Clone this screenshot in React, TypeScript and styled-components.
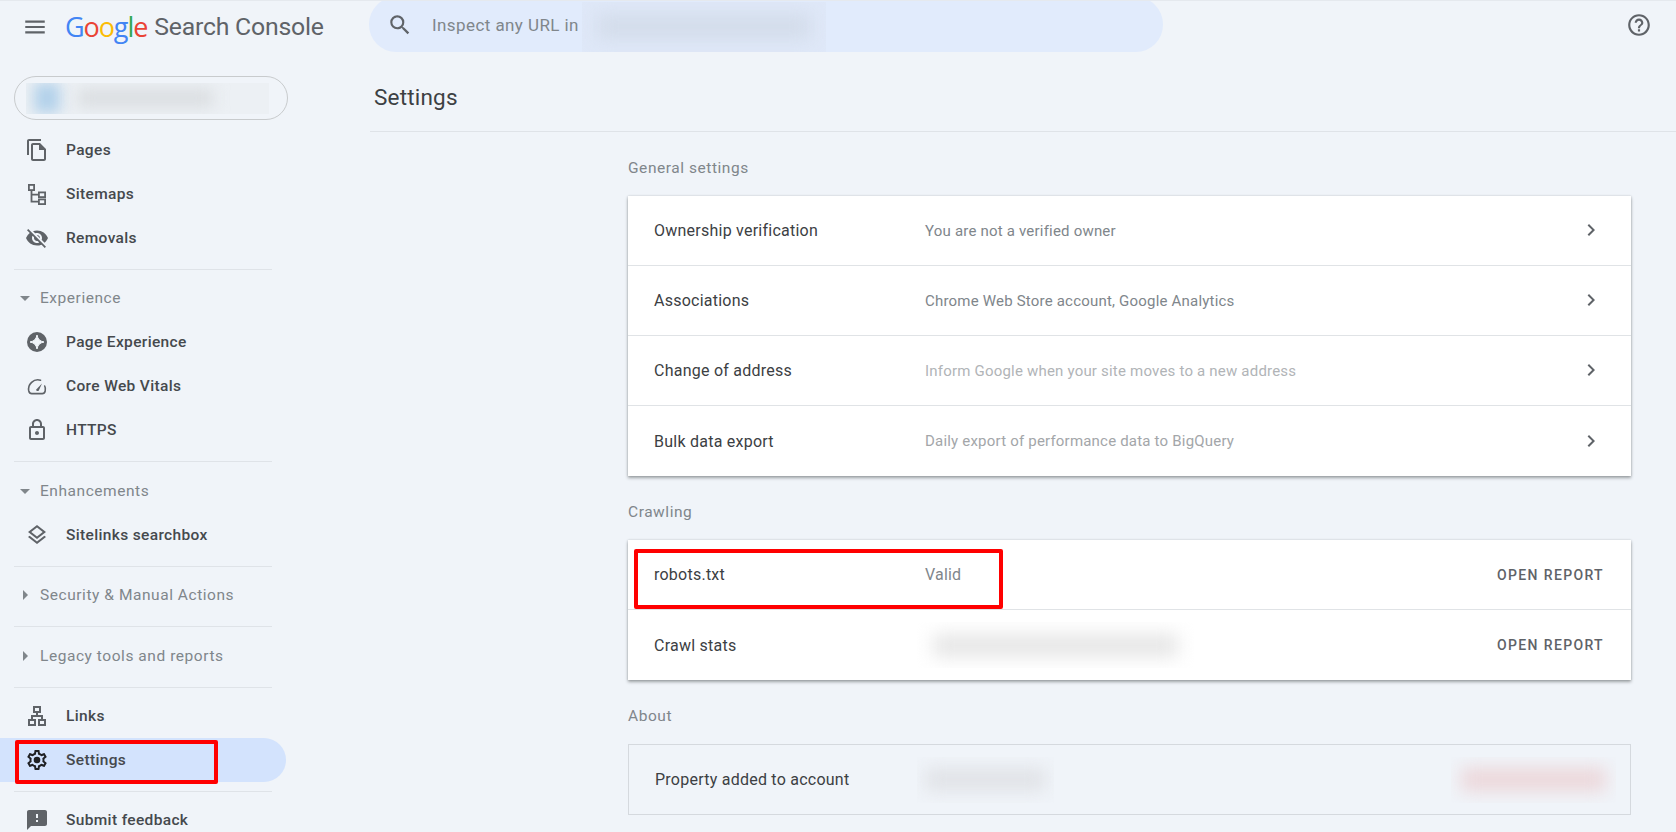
import styled, { createGlobalStyle } from "styled-components"
import { ReactNode } from "react"
import {
  MdArrowDropDown,
  MdArrowRight,
  MdChevronRight,
  MdFeedback,
  MdHelpOutline,
  MdMenu,
  MdOutlineFileCopy,
  MdOutlineLan,
  MdOutlineLayers,
  MdOutlineLock,
  MdSearch,
  MdVisibilityOff,
} from "react-icons/md"

const GlobalStyle = createGlobalStyle`
  html, body {
    margin: 0;
    background: #f0f4f9;
  }
  * {
    box-sizing: border-box;
  }
`

function SitemapIcon() {
  return (
    <svg viewBox="0 0 24 24" width="24" height="24" fill="none" stroke="currentColor" strokeWidth="1.8">
      <rect x="3.9" y="2.9" width="5.2" height="5.2" />
      <rect x="13.9" y="10.4" width="6.2" height="4.7" />
      <rect x="13.9" y="17.4" width="6.2" height="4.7" />
      <path d="M6.5 8v11.7h7.4M6.5 12.7h7.4" />
    </svg>
  )
}

function StarCircleIcon() {
  return (
    <svg viewBox="0 0 24 24" width="24" height="24">
      <circle cx="12" cy="12" r="10" fill="currentColor" />
      <path
        d="M12 5c.9 4.300 2.700 6.100 7 7-4.300.9-6.100 2.700-7 7-.9-4.300-2.700-6.100-7-7 4.300-.9 6.100-2.700 7-7z"
        fill="#f0f4f9"
        stroke="#f0f4f9"
        strokeWidth="1"
        strokeLinejoin="round"
      />
    </svg>
  )
}

function GaugeIcon() {
  return (
    <svg viewBox="0 0 24 24" width="24" height="24" fill="none" stroke="currentColor" strokeWidth="1.6">
      <path d="M15.5 6.200A9.300 9.300 0 0 0 3.800 17c.4 1.600 1.300 2.600 2.900 2.600h10.600c1.600 0 2.500-1 2.900-2.600.5-1.800.2-3.600-.5-5" strokeLinecap="round" />
      <path d="M11 15.700 17 9.500l-3.300 7.200a1.700 1.700 0 0 1-2.700-1z" fill="currentColor" stroke="none" />
    </svg>
  )
}

function GearIcon() {
  return (
    <svg viewBox="0 0 24 24" width="24" height="24" fill="currentColor">
      <path d="M19.43 12.98c.04-.32.07-.64.07-.98 0-.34-.03-.66-.07-.98l2.11-1.65c.19-.15.24-.42.12-.64l-2-3.46c-.09-.16-.26-.25-.44-.25-.06 0-.12.01-.17.03l-2.49 1c-.52-.4-1.08-.73-1.69-.98l-.38-2.65C14.46 2.18 14.25 2 14 2h-4c-.25 0-.46.18-.49.42l-.38 2.65c-.61.25-1.17.59-1.69.98l-2.49-1c-.06-.02-.12-.03-.18-.03-.17 0-.34.09-.43.25l-2 3.46c-.13.22-.07.49.12.64l2.11 1.65c-.04.32-.07.65-.07.98 0 .33.03.66.07.98l-2.11 1.65c-.19.15-.24.42-.12.64l2 3.46c.09.16.26.25.44.25.06 0 .12-.01.17-.03l2.49-1c.52.4 1.08.73 1.69.98l.38 2.65c.03.24.24.42.49.42h4c.25 0 .46-.18.49-.42l.38-2.65c.61-.25 1.17-.59 1.69-.98l2.49 1c.06.02.12.03.18.03.17 0 .34-.09.43-.25l2-3.46c.12-.22.07-.49-.12-.64l-2.11-1.65zm-1.98-1.71c.04.31.05.52.05.73 0 .21-.02.43-.05.73l-.14 1.13.89.7 1.08.84-.7 1.21-1.27-.51-1.04-.42-.9.68c-.43.32-.84.56-1.25.73l-1.06.43-.16 1.13-.2 1.35h-1.4l-.19-1.35-.16-1.13-1.06-.43c-.43-.18-.83-.41-1.23-.71l-.91-.7-1.06.43-1.27.51-.7-1.21 1.08-.84.89-.7-.14-1.13c-.03-.31-.05-.54-.05-.74s.02-.43.05-.73l.14-1.13-.89-.7-1.08-.84.7-1.21 1.27.51 1.04.42.9-.68c.43-.32.84-.56 1.25-.73l1.06-.43.16-1.13.2-1.35h1.39l.19 1.35.16 1.13 1.06.43c.43.18.83.41 1.23.71l.91.7 1.06-.43 1.27-.51.7 1.21-1.07.85-.89.7.14 1.13z" />
      <circle cx="12" cy="12" r="3.300" />
    </svg>
  )
}

type NavEntry = { label: string; icon: ReactNode }

const topNav: NavEntry[] = [
  { label: "Pages", icon: <MdOutlineFileCopy size={24} /> },
  { label: "Sitemaps", icon: <SitemapIcon /> },
  { label: "Removals", icon: <MdVisibilityOff size={24} /> },
]

const experienceNav: NavEntry[] = [
  { label: "Page Experience", icon: <StarCircleIcon /> },
  { label: "Core Web Vitals", icon: <GaugeIcon /> },
  { label: "HTTPS", icon: <MdOutlineLock size={24} /> },
]

const generalRows = [
  { label: "Ownership verification", value: "You are not a verified owner", tone: "#80868b" },
  { label: "Associations", value: "Chrome Web Store account, Google Analytics", tone: "#80868b" },
  { label: "Change of address", value: "Inform Google when your site moves to a new address", tone: "#b1b4b7" },
  { label: "Bulk data export", value: "Daily export of performance data to BigQuery", tone: "#a3a6a9" },
]

export default function App() {
  return (
    <Page>
      <GlobalStyle />
      <Sidebar>
        <Brand>
          <MenuButton>
            <MdMenu size={26} />
          </MenuButton>
          <GoogleWord>
            <b style={{ color: "#4285f4" }}>G</b>
            <b style={{ color: "#ea4335" }}>o</b>
            <b style={{ color: "#fbbc05" }}>o</b>
            <b style={{ color: "#4285f4" }}>g</b>
            <b style={{ color: "#34a853" }}>l</b>
            <b style={{ color: "#ea4335" }}>e</b>
          </GoogleWord>
          <ProductWord>Search Console</ProductWord>
        </Brand>

        <PropertyPill>
          <PropertyBlur>
            <BlurDot />
            <BlurLine />
          </PropertyBlur>
        </PropertyPill>

        <Nav>
          {topNav.map((item) => (
            <NavItem key={item.label}>
              <NavIcon>{item.icon}</NavIcon>
              {item.label}
            </NavItem>
          ))}
          <Divider />

          <GroupHeader>
            <GroupArrow>
              <MdArrowDropDown size={24} />
            </GroupArrow>
            Experience
          </GroupHeader>
          {experienceNav.map((item) => (
            <NavItem key={item.label}>
              <NavIcon>{item.icon}</NavIcon>
              {item.label}
            </NavItem>
          ))}
          <Divider />

          <GroupHeader>
            <GroupArrow>
              <MdArrowDropDown size={24} />
            </GroupArrow>
            Enhancements
          </GroupHeader>
          <NavItem>
            <NavIcon>
              <MdOutlineLayers size={24} />
            </NavIcon>
            Sitelinks searchbox
          </NavItem>
          <Divider />

          <GroupHeader>
            <GroupArrow>
              <MdArrowRight size={24} />
            </GroupArrow>
            Security &amp; Manual Actions
          </GroupHeader>
          <Divider />

          <GroupHeader>
            <GroupArrow>
              <MdArrowRight size={24} />
            </GroupArrow>
            Legacy tools and reports
          </GroupHeader>
          <Divider />

          <NavItem>
            <NavIcon>
              <MdOutlineLan size={24} />
            </NavIcon>
            Links
          </NavItem>
          <NavItem $active>
            <NavIcon $active>
              <GearIcon />
            </NavIcon>
            Settings
            <SettingsMark />
          </NavItem>
          <Divider />

          <NavItem>
            <NavIcon>
              <MdFeedback size={24} />
            </NavIcon>
            Submit feedback
          </NavItem>
        </Nav>
      </Sidebar>

      <Main>
        <TopBar>
          <SearchBar>
            <MdSearch size={26} color="#5f6368" />
            <SearchText>Inspect any URL in</SearchText>
            <SearchBlur>
              <BlurBar $color="#d3dcea" />
            </SearchBlur>
          </SearchBar>
          <HelpButton>
            <MdHelpOutline size={26} />
          </HelpButton>
        </TopBar>

        <TitleRow>
          <Title>Settings</Title>
        </TitleRow>

        <Content>
          <SectionTitle>General settings</SectionTitle>
          <Card>
            {generalRows.map((row) => (
              <Row key={row.label}>
                <RowLabel>{row.label}</RowLabel>
                <RowValue $tone={row.tone}>{row.value}</RowValue>
                <RowChevron>
                  <MdChevronRight size={24} />
                </RowChevron>
              </Row>
            ))}
          </Card>

          <SectionTitle>Crawling</SectionTitle>
          <Card>
            <Row>
              <RowLabel>robots.txt</RowLabel>
              <StatusValue>Valid</StatusValue>
              <RowAction>OPEN REPORT</RowAction>
              <RobotsMark />
            </Row>
            <Row>
              <RowLabel>Crawl stats</RowLabel>
              <ValueBlur $width={279}>
                <BlurBar $color="#e6e6e6" />
              </ValueBlur>
              <RowAction>OPEN REPORT</RowAction>
            </Row>
          </Card>

          <SectionTitle>About</SectionTitle>
          <AboutBox>
            <AboutLabel>Property added to account</AboutLabel>
            <ValueBlur $width={137}>
              <BlurBar $color="#e0e2e6" />
            </ValueBlur>
            <RemoveBlur>
              <BlurBar $color="#ecd6d9" />
            </RemoveBlur>
          </AboutBox>
        </Content>
      </Main>
    </Page>
  )
}

const Page = styled.div`
  display: grid;
  grid-template-columns: 369px 1fr;
  height: 832px;
  overflow: hidden;
  border-top: 1px solid #e5e9ee;
  font-family: Roboto, "Liberation Sans", sans-serif;
  background: #f0f4f9;
`

const Sidebar = styled.aside`
  display: flex;
  flex-direction: column;
  min-width: 0;
`

const Brand = styled.div`
  display: flex;
  align-items: center;
  height: 51px;
  padding-left: 22px;
`

const MenuButton = styled.div`
  display: flex;
  width: 43px;
  color: #5f6368;
`

const GoogleWord = styled.div`
  font-family: "Open Sans", Roboto, sans-serif;
  font-size: 27px;
  letter-spacing: -1.1px;
  line-height: 34px;

  b {
    font-weight: 400;
  }
`

const ProductWord = styled.div`
  margin-left: 7px;
  font-size: 24.800px;
  line-height: 34px;
  letter-spacing: -0.2px;
  color: #5f6368;
`

const PropertyPill = styled.div`
  display: flex;
  align-items: center;
  width: 274px;
  height: 44px;
  margin: 24px 0 0 14px;
  padding-left: 11px;
  border: 1px solid #c8cbcd;
  border-radius: 22px;
`

const PropertyBlur = styled.div`
  display: flex;
  align-items: center;
  width: 243px;
  height: 31px;
  overflow: hidden;
  background: #ecf0f4;
`

const BlurDot = styled.div`
  flex: none;
  width: 26px;
  height: 30px;
  margin-left: 8px;
  background: #b2d1ea;
  filter: blur(7px);
`

const BlurLine = styled.div`
  width: 135px;
  height: 16px;
  margin-left: 18px;
  background: #d8dbde;
  filter: blur(8px);
`

const Nav = styled.nav`
  display: flex;
  flex-direction: column;
  margin-top: 8px;
`

const NavItem = styled.div<{ $active?: boolean }>`
  position: relative;
  display: flex;
  align-items: center;
  flex: none;
  width: 286px;
  height: 44px;
  padding-left: 25px;
  border-radius: 0 22px 22px 0;
  background: ${({ $active }) => ($active ? "#d3e3fd" : "transparent")};
  font-size: 15.500px;
  font-weight: 500;
  letter-spacing: 0.35px;
  color: #45494d;
`

const NavIcon = styled.span<{ $active?: boolean }>`
  display: flex;
  width: 41px;
  color: ${({ $active }) => ($active ? "#202124" : "#5f6368")};
`

const Divider = styled.div`
  flex: none;
  width: 258px;
  height: 1px;
  margin: 9px 0 6.400px 14px;
  background: #dfe3e8;
`

const GroupHeader = styled.div`
  display: flex;
  align-items: center;
  flex: none;
  height: 44px;
  padding-left: 13px;
  font-size: 15.500px;
  font-weight: 400;
  letter-spacing: 0.55px;
  color: #80868b;
`

const GroupArrow = styled.span`
  display: flex;
  width: 27px;
  color: #80868b;
`

const SettingsMark = styled.div`
  position: absolute;
  top: 2px;
  left: 15px;
  width: 203px;
  height: 44px;
  border: 4px solid #ff0000;
  border-radius: 2px;
`

const Main = styled.main`
  display: flex;
  flex-direction: column;
  min-width: 0;
`

const TopBar = styled.div`
  display: flex;
  align-items: flex-start;
  justify-content: space-between;
  height: 51px;
  padding-right: 24px;
`

const SearchBar = styled.div`
  display: flex;
  align-items: center;
  flex: none;
  width: 794px;
  height: 55px;
  margin-top: -4px;
  padding: 0 0 0 18px;
  border-radius: 27px;
  background: #e1ebfc;
`

const SearchText = styled.span`
  margin-left: 19px;
  font-size: 17px;
  letter-spacing: 0.42px;
  color: #80868b;
`

const SearchBlur = styled.div`
  display: flex;
  align-items: center;
  width: 244px;
  height: 50px;
  margin: 4px 0 0 3px;
  overflow: hidden;
  background: #dfe8f8;
`

const BlurBar = styled.div<{ $color: string }>`
  width: 88%;
  height: 50%;
  margin: 0 auto;
  background: ${({ $color }) => $color};
  filter: blur(9px);
`

const HelpButton = styled.div`
  display: flex;
  margin-top: 11px;
  color: #5f6368;
`

const TitleRow = styled.div`
  display: flex;
  align-items: center;
  height: 80px;
  margin-left: 1px;
  padding: 11px 0 0 4px;
  border-bottom: 1px solid #dfe3e8;
`

const Title = styled.h1`
  margin: 0;
  font-size: 22.500px;
  font-weight: 400;
  letter-spacing: 0.2px;
  color: #3c4043;
`

const Content = styled.div`
  display: flex;
  flex-direction: column;
  width: 1003px;
  margin-left: 259px;
`

const SectionTitle = styled.h2`
  margin: 26px 0 18px;
  font-size: 15.500px;
  font-weight: 400;
  line-height: 20px;
  letter-spacing: 0.55px;
  color: #80868b;
`

const Card = styled.div`
  background: #fff;
  box-shadow: 0 2px 3px rgba(60, 64, 67, 0.45), 0 0 2px rgba(60, 64, 67, 0.2);
`

const Row = styled.div`
  position: relative;
  display: flex;
  align-items: center;
  height: 70px;
  padding: 0 27px 0 26px;

  &:not(:last-child) {
    border-bottom: 1px solid #e0e3e6;
  }
`

const RowLabel = styled.span`
  flex: none;
  width: 271px;
  font-size: 16px;
  letter-spacing: 0.24px;
  color: #3c4043;
`

const RowValue = styled.span<{ $tone: string }>`
  font-size: 15px;
  letter-spacing: 0.2px;
  color: ${({ $tone }) => $tone};
`

const StatusValue = styled.span`
  font-size: 16px;
  letter-spacing: 0.2px;
  color: #80868b;
`

const RowChevron = styled.span`
  display: flex;
  margin: -1px 1px 0 auto;
  color: #5f6368;
`

const RowAction = styled.span`
  margin-left: auto;
  font-size: 14px;
  font-weight: 500;
  letter-spacing: 1.35px;
  color: #5f6368;
`

const RobotsMark = styled.div`
  position: absolute;
  top: 9px;
  left: 6px;
  width: 369px;
  height: 60px;
  border: 4px solid #ff0000;
  border-radius: 2px;
`

const ValueBlur = styled.div<{ $width: number }>`
  display: flex;
  align-items: center;
  width: ${({ $width }) => $width}px;
  height: 46px;
  margin-left: -9px;
  overflow: hidden;
`

const AboutBox = styled.div`
  display: flex;
  align-items: center;
  height: 71px;
  padding: 0 14px 0 26px;
  border: 1px solid #d5d9de;
`

const AboutLabel = styled.span`
  flex: none;
  width: 271px;
  font-size: 16px;
  letter-spacing: 0.24px;
  color: #3c4043;
`

const RemoveBlur = styled.div`
  display: flex;
  align-items: center;
  width: 165px;
  height: 46px;
  margin-left: auto;
  overflow: hidden;
`
